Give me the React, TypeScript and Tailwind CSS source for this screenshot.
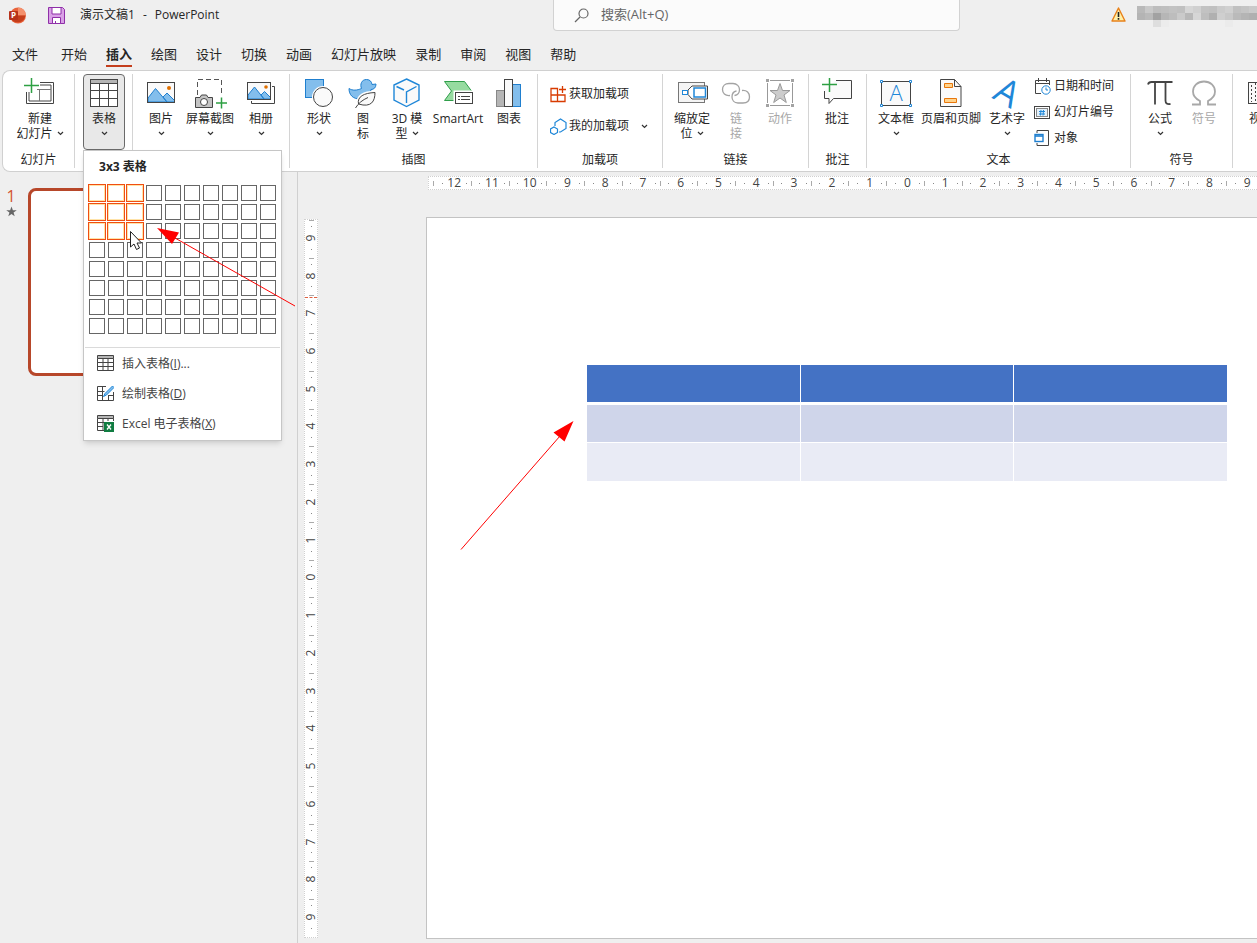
import React, { useState } from 'react';

const FONT = 'font-["Open_Sans","Noto_Sans_CJK_SC",sans-serif]';

const TABS = ['文件', '开始', '插入', '绘图', '设计', '切换', '动画', '幻灯片放映', '录制', '审阅', '视图', '帮助'];

const GRID_COLS = 10;
const GRID_ROWS = 8;

const H_MARKS = [12, 11, 10, 9, 8, 7, 6, 5, 4, 3, 2, 1, 0, 1, 2, 3, 4, 5, 6, 7, 8, 9];
const V_MARKS = [9, 8, 7, 6, 5, 4, 3, 2, 1, 0, 1, 2, 3, 4, 5, 6, 7, 8, 9];

// Pixelated account name, one shade per block
const MOSAIC = [
  ['#b9b9b9', '#c9c9c9', '#bdbdbd', '#bfbfbf', '#c2c2c2', '#c0c0c0', '#d6d6d6', '#d0d0d0', '#c2c2c2', '#c0c0c0', '#cbcbcb', '#d0d0d0', '#c0c0c0', '#c4c4c4', '#cacaca'],
  ['#b4b4b4', '#bababa', '#a2a2a2', '#b6b6b6', '#bdbdbd', '#cacaca', '#b8b8b8', '#d6d6d6', '#bebebe', '#b0b0b0', '#cfcfcf', '#c8c8c8', '#bababa', '#b4b4b4', '#b0b0b0'],
  ['#efefef', '#efefef', '#dedede', '#ececec', '#efefef', '#efefef', '#efefef', '#efefef', '#efefef', '#efefef', '#efefef', '#ebebeb', '#efefef', '#efefef', '#efefef'],
];

const Chevron = () => (
  <svg width="7" height="5" viewBox="0 0 7 5" fill="none" stroke="#333" strokeWidth="1.2">
    <path d="M1 1l2.5 2.5L6 1" />
  </svg>
);

const Big: React.FC<{ children: React.ReactNode }> = ({ children }) => (
  <svg width="32" height="33" viewBox="0 0 32 33" fill="none" stroke="#444" className="shrink-0 overflow-visible">{children}</svg>
);

const Small: React.FC<{ children: React.ReactNode }> = ({ children }) => (
  <svg width="17" height="17" viewBox="0 0 17 17" fill="none" stroke="#444" className="shrink-0">{children}</svg>
);

const NewSlideIcon = () => (
  <Big>
    <path d="M16 4.500h13.500v21h-27V14M16 7h11v16H5V14" />
    <path d="M13 11.500h14M15.500 11.500V23" stroke="#777" />
    <path d="M7.500 0v15M0 7.500h15" stroke="#2ea043" strokeWidth="1.500" />
  </Big>
);

const TableIcon = () => (
  <Big>
    <rect x="2.500" y="1.500" width="27" height="27" fill="#fff" />
    <rect x="2.500" y="1.500" width="27" height="4" fill="#b5b5b5" />
    <path d="M11.500 5.500v23M20.500 5.500v23M2.500 12.500h27M2.500 20.500h27" />
  </Big>
);

const PictureIcon = () => (
  <Big>
    <rect x="2.500" y="4.500" width="27" height="20" fill="#fafafa" />
    <path d="M3 20l7.500-9.500L22 24H3zM18 19l4-4 7.500 7.500V24H22z" fill="#83beec" stroke="#1f7fcf" />
    <circle cx="24" cy="10" r="2" fill="#e07000" stroke="none" />
    <rect x="2.500" y="4.500" width="27" height="20" />
  </Big>
);

const ScreenshotIcon = () => (
  <Big>
    <path d="M3.500 17V1.500h24V18" stroke="#555" strokeDasharray="5 3" />
    <path d="M1.500 19.500H6l1.500-2.500h5l1.500 2.500h4.500v10h-17z" fill="#c4c4c4" />
    <circle cx="10" cy="24" r="3.500" fill="#fff" />
    <path d="M27.500 19.500v11M22 25h11" stroke="#2ea043" strokeWidth="1.500" />
  </Big>
);

const AlbumIcon = () => (
  <Big>
    <path d="M27 8.500h2.500v17h-23V23" />
    <rect x="2.500" y="4.500" width="23" height="17" fill="#fafafa" />
    <path d="M3 17l6.500-8L19 21H3zM16 17l3.500-3.500 6 6V21H19z" fill="#83beec" stroke="#1f7fcf" />
    <circle cx="21" cy="9" r="1.800" fill="#e07000" stroke="none" />
    <rect x="2.500" y="4.500" width="23" height="17" />
  </Big>
);

const ShapesIcon = () => (
  <Big>
    <rect x="2.500" y="1.500" width="18" height="18" fill="#83beec" stroke="#1f7fcf" />
    <circle cx="20" cy="19" r="11" fill="#fff" stroke="none" />
    <circle cx="20" cy="19" r="9.500" fill="#fafafa" />
  </Big>
);

const DuckIcon = () => (
  <Big>
    <path d="M2 10.500C5.500 12.800 10 12.500 14.500 10.500 12.800 6.500 14.500 1.500 19.500 1.500c3.500 0 5.200 2.300 5.500 5l4-.5c0 3.500-2 5.500-5 5.500-.5 5-5 9.500-11 9.500C6 21 2 17 2 10.500z" fill="#83beec" stroke="#1f7fcf" />
    <path d="M9 30c2-5 4-7 8-10M11.500 26.500C9 18 17 14 28 14c.5 8-3 16-16.500 12.500z" fill="#fff" stroke="#fff" strokeWidth="2.500" />
    <path d="M11.500 26C10 18.500 17 15 28 14.500c0 8.500-3.500 15.500-16.500 11.500z" fill="#fafafa" />
    <path d="M8.500 30c3-5 7-8 12.500-10.500" />
  </Big>
);

const CubeIcon = () => (
  <Big>
    <path d="M15.500 1L28 7v15l-12.500 6.500L3 22V7z" fill="#fafafa" stroke="#1f87d8" strokeWidth="1.400" />
    <path d="M5.500 8.500L13 12M15.500 25V14L25.500 8.500" stroke="#1f87d8" strokeWidth="1.400" />
  </Big>
);

const SmartArtIcon = () => (
  <Big>
    <path d="M2.500 3.500h20l7 9.500-6 9.500h-21l7-9.500z" fill="#96dba0" stroke="#2f9e4a" />
    <rect x="11.500" y="12.500" width="20" height="14" fill="#fff" stroke="none" />
    <rect x="13.500" y="14.500" width="17" height="11" fill="#fff" />
    <path d="M16 18.500h12M16 21.500h12" strokeDasharray="2 1 20" />
  </Big>
);

const ChartIcon = () => (
  <Big>
    <rect x="3.500" y="12.500" width="8" height="16" fill="#b5b5b5" stroke="#888" />
    <rect x="19.500" y="6.500" width="8" height="22" fill="#83beec" stroke="#1f7fcf" />
    <rect x="11.500" y="1.500" width="8" height="27" fill="#fafafa" />
  </Big>
);

const ZoomIcon = () => (
  <Big>
    <rect x="2.500" y="4.500" width="26" height="20" fill="#f5f5f5" stroke="#777" />
    <path d="M12 12l4-4h15.500v13H16l-4-4.500z" fill="#fff" />
    <rect x="6.500" y="12.500" width="5" height="4" fill="#fff" stroke="#1f87d8" />
    <rect x="18" y="10" width="11.500" height="9" fill="#fff" stroke="#1f87d8" strokeWidth="1.500" />
  </Big>
);

const LinkIcon = () => (
  <Big>
    <g stroke="#a3a3a3" strokeWidth="1.300">
      <path d="M10 17.500C5 18 2.500 15 2.500 11.500S5 5.500 9 5.500h4c4 0 6.500 3 6.500 6 0 3.500-2 5.500-5 6" />
      <path d="M22 12.500c5-.5 7.500 2.500 7.500 6.500s-2.500 6-6.500 6h-5c-4 0-6-3-6-6 0-3.500 1.500-5.500 4.500-6" />
    </g>
  </Big>
);

const ActionIcon = () => (
  <Big>
    <path d="M3.500 5v20M28.500 5v20M6 2.500h20M6 27.500h20" stroke="#999" />
    <path d="M2 1h3v3H2zM27 1h3v3h-3zM2 26h3v3H2zM27 26h3v3h-3z" fill="#a3a3a3" stroke="none" />
    <path d="M16 5.500l2.500 7h7.500l-6 4.500 2.300 7.500L16 20l-6.300 4.500L12 17l-6-4.500h7.500z" fill="#ccc" stroke="#999" />
  </Big>
);

const CommentIcon = () => (
  <Big>
    <path d="M15 2.500h15.500v18h-18L8 25.500v-5H3.500V13" fill="#fafafa" />
    <path d="M8.500 0v14M1 6.500h15" stroke="#2ea043" strokeWidth="1.500" />
  </Big>
);

const TextBoxIcon = () => (
  <Big>
    <rect x="1.500" y="3.500" width="29" height="24" fill="#fafafa" />
    <g fill="#fff" stroke="#1f87d8">
      <path d="M.5 2.500h2v2h-2zM29.500 2.500h2v2h-2zM.5 26.500h2v2h-2zM29.500 26.500h2v2h-2z" />
    </g>
    <text x="16" y="23" textAnchor="middle" fontSize="22" fontWeight="300" fill="#1f87d8" stroke="none">A</text>
  </Big>
);

const HeaderFooterIcon = () => (
  <Big>
    <path d="M5.500 1.500h14l6.500 7v20H5.500z" fill="#fafafa" />
    <path d="M19.500 1.500v7H26" />
    <path d="M9.500 5.500h8v4h-8zM9.500 20.500h12v4h-12z" fill="#ffd28a" stroke="#e8760a" />
  </Big>
);

const WordArtIcon = () => (
  <Big>
    <text x="16" y="27" textAnchor="middle" fontSize="36" fill="#1f87d8" stroke="none" transform="rotate(30 16 15)">A</text>
  </Big>
);

const EquationIcon = () => (
  <Big>
    <path d="M4 6.500c.5-2 1.500-2.500 3.500-2.500h21M11 4v22.500M21.500 4v18.500c0 3 1.500 4 5 3.500" strokeWidth="1.800" />
  </Big>
);

const SymbolIcon = () => (
  <Big>
    <path d="M4 26.500h8v-3.500C7 20.500 5 17.500 5 13.500 5 8 9.500 3.500 16 3.500S27 8 27 13.500c0 4-2 7-7 9.500v3.500h8" stroke="#a8a8a8" strokeWidth="1.800" />
  </Big>
);

const VideoIcon = () => (
  <Big>
    <rect x="3.500" y="4.500" width="27" height="21" fill="#fafafa" />
    <path d="M6.500 7v17M10.500 5v20" strokeDasharray="2 2" />
  </Big>
);

const GetAddinsIcon = () => (
  <Small>
    <path d="M1 2.500h6.500v13H1zM1 9h14v6.500H7.500M12.500 0v7M9 3.500h7" stroke="#d83b01" strokeWidth="1.300" />
  </Small>
);

const MyAddinsIcon = () => (
  <Small>
    <path d="M5 8V4.500L10.500 1 16 4.500v6L10.500 14H9M4 9l3.500 2v3.500L4 16.500l-3.500-2V11z" stroke="#1f87d8" strokeWidth="1.200" />
  </Small>
);

const DateIcon = () => (
  <Small>
    <path d="M7 15.500H1.500v-13h14V7M1.500 5.500h14M4.500 0v4M12.500 0v4" />
    <circle cx="12" cy="12" r="4.200" fill="#fff" stroke="#1f87d8" />
    <path d="M12 9.500V12h2" stroke="#1f87d8" />
  </Small>
);

const SlideNumberIcon = () => (
  <Small>
    <rect x=".5" y="2.500" width="15" height="12" />
    <rect x="2.500" y="4.500" width="11" height="8" fill="#e3f1fb" stroke="#888" />
    <path d="M7 6l-.5 5.500M9.500 6L9 11.500M5 7.500h6M5 10h6" stroke="#1f87d8" />
  </Small>
);

const ObjectIcon = () => (
  <Small>
    <path d="M3 3V.5h11.500v15H3V13" />
    <rect x="1" y="4.500" width="8" height="7" fill="#fff" stroke="#1f7fcf" strokeWidth="1.400" />
    <path d="M1 6h8" stroke="#1f7fcf" strokeWidth="1.600" />
  </Small>
);

interface ToolProps {
  icon: React.ReactNode;
  lines: string[];
  width: string;
  arrow?: boolean;
  disabled?: boolean;
  open?: boolean;
  onClick?: () => void;
}

const Tool: React.FC<ToolProps> = ({ icon, lines, width, arrow, disabled, open, onClick }) => (
  <button
    disabled={disabled}
    onClick={onClick}
    className={`flex h-[76px] shrink-0 flex-col items-center rounded border pt-[3px] text-xs leading-[15px] whitespace-nowrap ${width} ${
      open ? 'border-[#6a6a6a] bg-[#e8e8e8]' : 'border-transparent'
    } ${disabled ? 'text-[#a8a8a8]' : ''}`}
  >
    {icon}
    {lines.map((line, i) => (
      <span key={i} className="flex items-center gap-1">
        {line}
        {arrow && lines.length > 1 && i === lines.length - 1 && <Chevron />}
      </span>
    ))}
    {arrow && lines.length === 1 && <span className="flex h-[15px] items-center"><Chevron /></span>}
  </button>
);

interface GroupProps {
  label: string;
  width: string;
  pad: string;
  children: React.ReactNode;
}

const Group: React.FC<GroupProps> = ({ label, width, pad, children }) => (
  <section className={`flex h-[94px] shrink-0 flex-col border-r border-[#d4d4d4] ${width}`}>
    <div className={`flex h-[76px] ${pad}`}>{children}</div>
    <div className="pt-px text-center text-xs leading-[17px]">{label}</div>
  </section>
);

const SmallTool: React.FC<{ icon: React.ReactNode; label: string; className: string }> = ({ icon, label, className }) => (
  <button className={`flex items-center text-xs whitespace-nowrap ${className}`}>
    {icon}
    {label}
  </button>
);

const InsertTableIcon = () => (
  <Small>
    <path d="M.5.5h16v3H.5z" fill="#b5b5b5" />
    <path d="M.5 3.500v12h16v-12M6 3.500v12M11 3.500v12M.5 7.500h16M.5 11.500h16" />
  </Small>
);

const DrawTableIcon = () => (
  <Small>
    <path d="M9 1.500H.5v14h16V7M5.500 1.500v14M11.500 11v5M.5 6.500h7M.5 10.500h5M11 10.500h5.500" />
    <path d="M15.500 1L8 8.500l-1.500 3 3-1.500L17 2.500z" fill="#83beec" stroke="#1f87d8" />
  </Small>
);

const ExcelIcon = () => (
  <Small>
    <path d="M.5.5h16v3H.5z" fill="#b5b5b5" />
    <path d="M.5 3.500v12H7M16.500 3.500V6M6 3.500v12M11 3.500V6M.5 7.500H7M.5 11.500H6" />
    <rect x="7" y="7" width="10" height="10" fill="#107c41" stroke="none" />
    <path d="M10 9.500l4 5M14 9.500l-4 5" stroke="#fff" strokeWidth="1.300" />
  </Small>
);

const MENU_ITEMS = [
  { icon: <InsertTableIcon />, text: '插入表格', hotkey: 'I', tail: '...' },
  { icon: <DrawTableIcon />, text: '绘制表格', hotkey: 'D', tail: '' },
  { icon: <ExcelIcon />, text: 'Excel 电子表格', hotkey: 'X', tail: '' },
];

interface TableMenuProps {
  size: { rows: number; cols: number };
  onHover: (rows: number, cols: number) => void;
}

const TableMenu: React.FC<TableMenuProps> = ({ size, onHover }) => (
  <div className="absolute top-full left-0 w-[199px] border border-[#c6c6c6] bg-white pb-0.5 shadow-md">
    <div className="h-[33px] pl-[15px] text-xs leading-8 font-bold">{size.cols}x{size.rows} 表格</div>
    <div className="mx-1 mb-[11px] grid grid-cols-[repeat(10,19px)]">
      {Array.from({ length: GRID_COLS * GRID_ROWS }, (_, i) => {
        const row = Math.floor(i / GRID_COLS) + 1;
        const col = (i % GRID_COLS) + 1;
        const on = row <= size.rows && col <= size.cols;
        return (
          <button
            key={i}
            aria-label={`${col}x${row}`}
            onMouseEnter={() => onHover(row, col)}
            className="flex h-[19px] w-[19px]"
          >
            <span className={on ? 'size-[18px] border border-[#f04e12] bg-white ring-1 ring-[#ffe3a8] ring-inset' : 'm-px size-4 border border-[#666] bg-white'} />
          </button>
        );
      })}
    </div>
    <div className="mx-px border-t border-[#dadada]">
      {MENU_ITEMS.map(item => (
        <button key={item.hotkey} className="flex h-[30px] w-full items-center gap-2 pl-3 text-xs text-[#444]">
          {item.icon}
          <span className="pt-0.5">{item.text}(<u>{item.hotkey}</u>){item.tail}</span>
        </button>
      ))}
    </div>
  </div>
);

const TitleBar = () => (
  <header className="flex h-[38px] items-start">
    <div className="flex h-[30px] w-[553px] shrink-0 items-center pl-[9px] text-xs">
      <svg width="17" height="17" viewBox="0 0 17 17">
        <circle cx="9" cy="8.500" r="8" fill="#e9633b" />
        <path d="M9 .5a8 8 0 0 1 8 8H9z" fill="#f4906c" />
        <path d="M1.500 11a8 8 0 0 0 15-2.500H9z" fill="#c43e1c" />
        <rect x="0" y="4" width="9" height="9" rx="1" fill="#b7321a" />
        <text x="4.500" y="11.300" textAnchor="middle" fontSize="8" fontWeight="bold" fill="#fff">P</text>
      </svg>
      <svg width="17" height="17" viewBox="0 0 17 17" fill="#d9a0e6" stroke="#8f2fa8" className="ml-[22px]">
        <path d="M.5.5h14l2 2v14H.5z" />
        <path d="M4 .5h9v6.500H4zM4.500 10.500h8v6h-8z" fill="#fff" />
        <path d="M7.500 14v2" />
      </svg>
      <h1 className="ml-[15px] flex gap-2">
        <span>演示文稿1</span>
        <span>-</span>
        <span>PowerPoint</span>
      </h1>
    </div>
    <label className="flex h-[31px] w-[407px] items-center gap-3 rounded-b border border-t-0 border-[#d2d2d2] bg-[#fbfbfb] pl-5">
      <svg width="15" height="15" viewBox="0 0 15 15" fill="none" stroke="#666" strokeWidth="1.200">
        <circle cx="9.500" cy="5.500" r="4.500" />
        <path d="M6 9l-5 5" />
      </svg>
      <input type="text" placeholder="搜索(Alt+Q)" aria-label="搜索" className="min-w-0 flex-1 bg-transparent text-[13px] outline-none placeholder:text-[#666]" />
    </label>
    <div className="flex flex-1 items-start justify-end gap-[11px] overflow-hidden">
      <svg width="15" height="15" viewBox="0 0 15 15" className="mt-[7px] shrink-0">
        <path d="M7.500 1L14 14H1z" fill="#fff0a8" stroke="#e8811a" strokeWidth="1.400" strokeLinejoin="round" />
        <path d="M7.500 5v5M7.500 11v1.800" stroke="#222" strokeWidth="1.600" />
      </svg>
      <div className="mt-1.5 grid shrink-0 grid-cols-[repeat(15,8px)]">
        {MOSAIC.flat().map((shade, i) => (
          <span key={i} className="h-[7px]" style={{ backgroundColor: shade }} />
        ))}
      </div>
    </div>
  </header>
);

const HorizontalRuler = () => (
  <div className="ml-[130px] h-[14px] border border-r-0 border-dotted border-[#d0d0d0] bg-white">
    <div className="flex h-3 w-[831px] text-xs text-[#444]">
      {H_MARKS.map((n, i) => (
        <div key={i} className="flex flex-1 items-center justify-between">
          <i className="mx-1 h-[5px] w-px bg-[#aaa]" />
          <i className="size-px bg-[#888]" />
          <span className="w-4 text-center leading-3">{n}</span>
          <i className="size-px bg-[#888]" />
        </div>
      ))}
    </div>
  </div>
);

const VerticalRuler = () => (
  <div className="relative ml-1.5 mt-0.5 h-[719px] w-[14px] shrink-0 border border-dotted border-[#d0d0d0] bg-white">
    <div className="flex h-[717px] flex-col text-xs text-[#444]">
      {V_MARKS.map((n, i) => (
        <div key={i} className="flex flex-1 flex-col items-center justify-between">
          <i className="h-px w-[5px] bg-[#aaa]" />
          <i className="size-px bg-[#888]" />
          <span className="-rotate-90 leading-3">{n}</span>
          <i className="mb-2 size-px bg-[#888]" />
        </div>
      ))}
    </div>
    <div className="absolute top-[77px] left-0 w-full border-t border-dashed border-[#e06040]" />
  </div>
);

const Slide = () => (
  <div className="ml-[108px] h-[722px] w-[962px] shrink-0 border border-[#c3c3c3] bg-white px-[159px] pt-[145px]">
    <table className="w-full table-fixed border-separate border-spacing-x-px border-spacing-y-0">
      <thead>
        <tr className="h-10">
          {[0, 1, 2].map(c => <th key={c} className="border-t-2 border-b border-white bg-[#4472c4]" />)}
        </tr>
      </thead>
      <tbody>
        <tr className="h-[39px]">
          {[0, 1, 2].map(c => <td key={c} className="border-t-2 border-white bg-[#cfd5ea]" />)}
        </tr>
        <tr className="h-[39px]">
          {[0, 1, 2].map(c => <td key={c} className="border-t border-white bg-[#e9ebf5]" />)}
        </tr>
      </tbody>
    </table>
  </div>
);

const App: React.FC = () => {
  const [tab, setTab] = useState('插入');
  const [menuOpen, setMenuOpen] = useState(true);
  const [size, setSize] = useState({ rows: 3, cols: 3 });

  return (
    <div className={`relative flex min-h-screen flex-col overflow-hidden bg-[#efefef] text-[#262626] ${FONT}`}>
      <TitleBar />

      <nav className="flex h-8 gap-[19px] pl-3 text-[13px] leading-8 whitespace-nowrap">
        {TABS.map((name, i) => (
          <button key={name} onClick={() => setTab(name)} className={`flex flex-col ${i === 0 ? 'mr-1' : ''}`}>
            <span className={name === tab ? 'h-[29px] border-b-2 border-[#c43e1c] font-bold' : 'h-[29px]'}>{name}</span>
          </button>
        ))}
      </nav>

      {/* Ribbon */}
      <div className="relative z-20 ml-0.5 flex h-[102px] rounded-l-lg border border-r-0 border-[#d0d0d0] bg-white pt-[3px]">
        <Group label="幻灯片" width="w-[72px]" pad="pl-[5px]">
          <Tool icon={<NewSlideIcon />} lines={['新建', '幻灯片']} width="w-16" arrow />
        </Group>
        <Group label="" width="w-[58px]" pad="pl-2">
          <div className="relative z-20">
            <Tool icon={<TableIcon />} lines={['表格']} width="w-[42px]" arrow open={menuOpen} onClick={() => setMenuOpen(!menuOpen)} />
            {menuOpen && <TableMenu size={size} onHover={(rows, cols) => setSize({ rows, cols })} />}
          </div>
        </Group>
        <Group label="" width="w-[157px]" pad="pl-2.5">
          <Tool icon={<PictureIcon />} lines={['图片']} width="w-9" arrow />
          <Tool icon={<ScreenshotIcon />} lines={['屏幕截图']} width="w-[62px]" arrow />
          <Tool icon={<AlbumIcon />} lines={['相册']} width="w-10" arrow />
        </Group>
        <Group label="插图" width="w-[248px]" pad="pl-[7px]">
          <Tool icon={<ShapesIcon />} lines={['形状']} width="w-11" arrow />
          <Tool icon={<DuckIcon />} lines={['图', '标']} width="w-11" />
          <Tool icon={<CubeIcon />} lines={['3D 模', '型']} width="w-11" arrow />
          <Tool icon={<SmartArtIcon />} lines={['SmartArt']} width="w-[58px]" />
          <Tool icon={<ChartIcon />} lines={['图表']} width="w-11" />
        </Group>
        <Group label="加载项" width="w-[125px]" pad="pl-3">
          <div className="flex flex-1 flex-col pt-1">
            <SmallTool icon={<GetAddinsIcon />} label="获取加载项" className="h-8 gap-0.5" />
            <div className="flex items-center gap-3">
              <SmallTool icon={<MyAddinsIcon />} label="我的加载项" className="h-8 gap-0.5" />
              <button aria-label="我的加载项"><Chevron /></button>
            </div>
          </div>
        </Group>
        <Group label="链接" width="w-[146px]" pad="pl-[7px]">
          <Tool icon={<ZoomIcon />} lines={['缩放定', '位']} width="w-11" arrow />
          <Tool icon={<LinkIcon />} lines={['链', '接']} width="w-11" disabled />
          <Tool icon={<ActionIcon />} lines={['动作']} width="w-11" disabled />
        </Group>
        <Group label="批注" width="w-[58px]" pad="pl-1.5">
          <Tool icon={<CommentIcon />} lines={['批注']} width="w-11" />
        </Group>
        <Group label="文本" width="w-[264px]" pad="pl-1.5">
          <Tool icon={<TextBoxIcon />} lines={['文本框']} width="w-[46px]" arrow />
          <Tool icon={<HeaderFooterIcon />} lines={['页眉和页脚']} width="w-16" />
          <Tool icon={<WordArtIcon />} lines={['艺术字']} width="w-12" arrow />
          <div className="flex flex-col gap-0.5 pl-[3px]">
            <SmallTool icon={<DateIcon />} label="日期和时间" className="h-6 gap-[3px]" />
            <SmallTool icon={<SlideNumberIcon />} label="幻灯片编号" className="h-6 gap-[3px]" />
            <SmallTool icon={<ObjectIcon />} label="对象" className="h-6 gap-[3px]" />
          </div>
        </Group>
        <Group label="符号" width="w-[102px]" pad="pl-[7px]">
          <Tool icon={<EquationIcon />} lines={['公式']} width="w-11" arrow />
          <Tool icon={<SymbolIcon />} lines={['符号']} width="w-11" disabled />
        </Group>
        <Group label="" width="w-[60px]" pad="pl-2">
          <Tool icon={<VideoIcon />} lines={['视频']} width="w-10" />
        </Group>
      </div>

      <div className="flex flex-1">
        {/* Slide thumbnails */}
        <aside className="flex w-[298px] shrink-0 items-start border-r border-[#d0d0d0] pt-4">
          <div className="flex w-7 flex-col items-center pr-1.5 text-base leading-4 text-[#d35230]">
            1
            <svg width="11" height="11" viewBox="0 0 24 24" fill="#666" className="mt-0.5">
              <path d="M12 1l3 8h8.500l-7 5 2.500 8.500L12 17.500 5 22.500 7.500 14l-7-5H9z" />
            </svg>
          </div>
          <div className="h-[188px] w-[250px] rounded-lg border-[3px] border-[#b7472a] bg-white" />
        </aside>

        <main className="min-w-0 flex-1 overflow-hidden pt-1">
          <HorizontalRuler />
          <div className="mt-[27px] flex">
            <VerticalRuler />
            <Slide />
          </div>
        </main>
      </div>

      {/* Pointer and arrows drawn over the window */}
      <svg width="600" height="560" viewBox="0 0 600 560" className="pointer-events-none absolute top-0 left-0 z-30">
        <path d="M295 306L175 238M461 549.500L560 436" stroke="#f00" fill="none" />
        <path d="M157 228l22 4.500-7 11.500zM573.500 421l-20 11.500L564.500 441.500z" fill="#f00" />
        <path d="M130.500 231.500v15.500l3.500-3 2.500 5.500 3-1.500-2.500-5h4.500z" fill="#fff" stroke="#222" />
      </svg>
    </div>
  );
};

export default App;
